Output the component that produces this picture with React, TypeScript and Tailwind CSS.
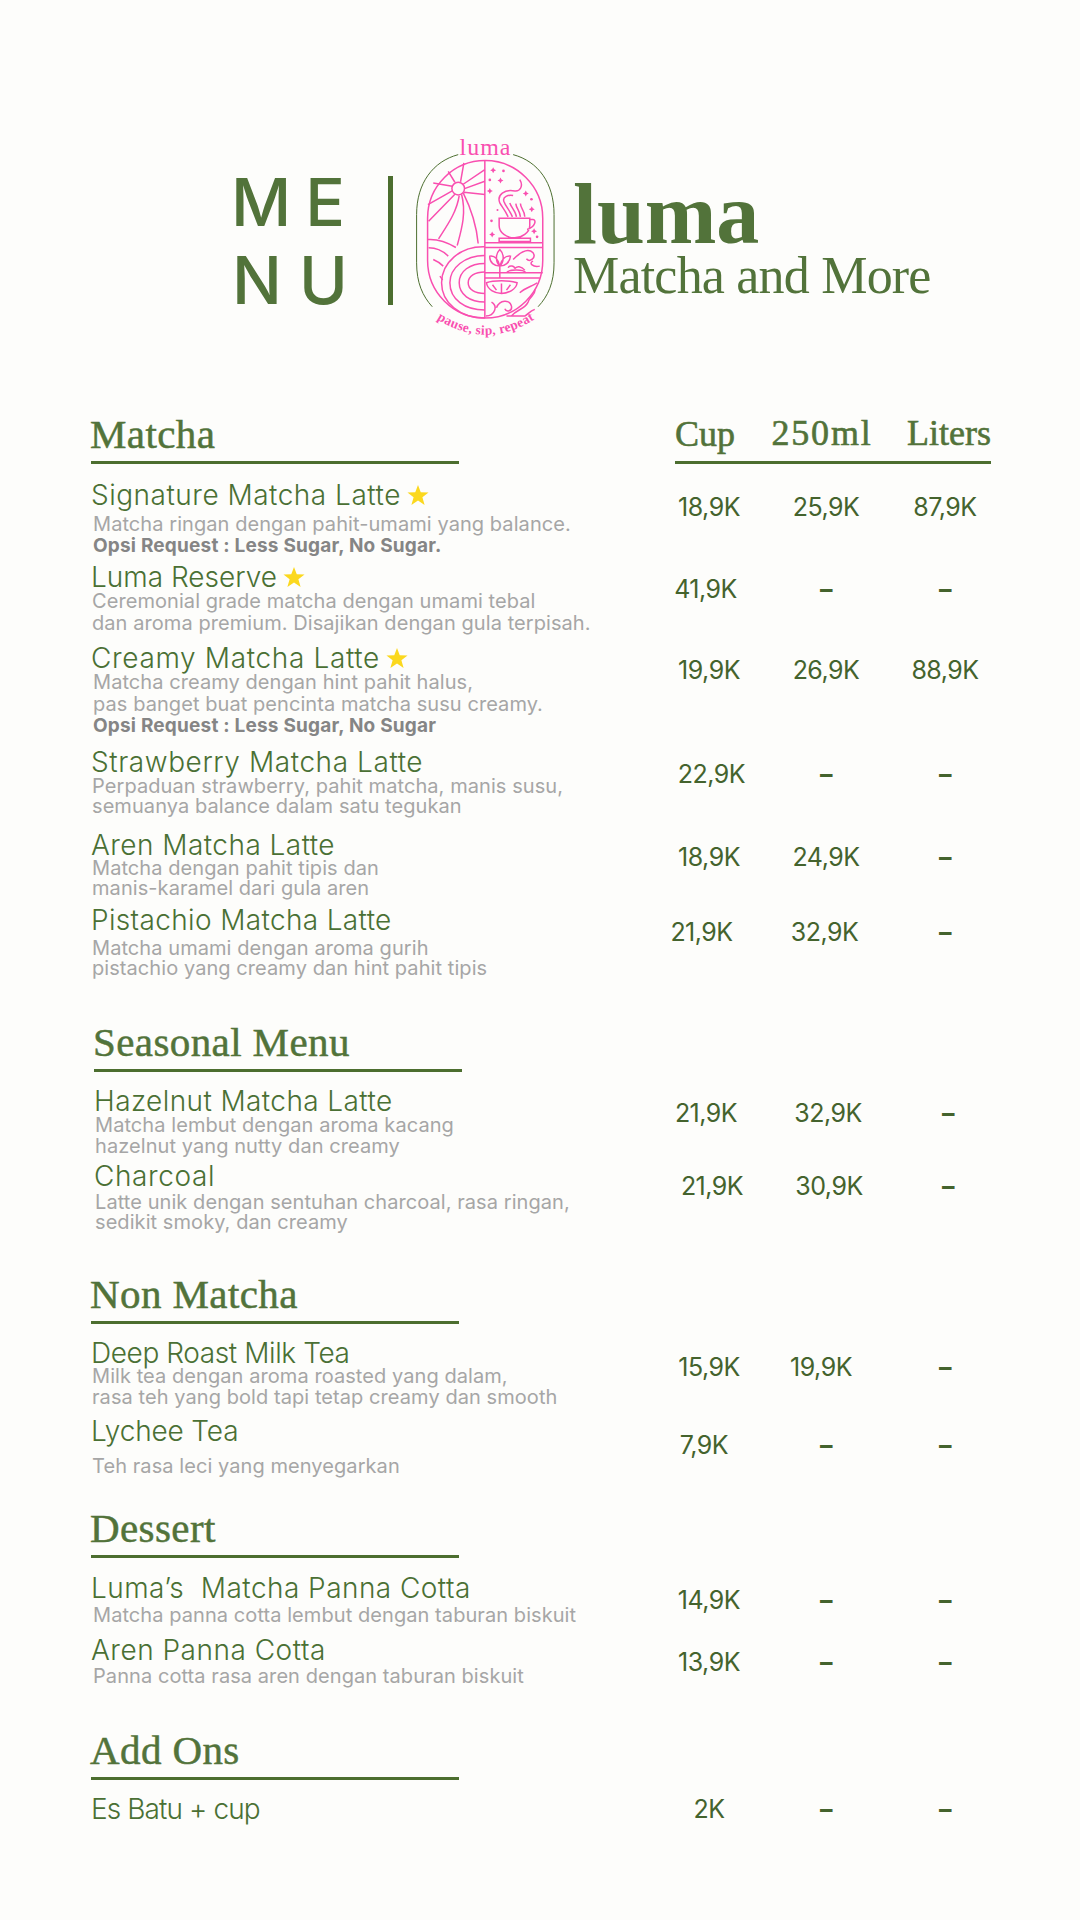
const serif = 'font-["Liberation_Serif",serif]'

interface Item {
  name: string
  star?: boolean
  desc?: string[]
  bold?: string
  prices: [string, string, string]
  rowClass: string
  nameClass?: string
  descClass?: string
  priceClass?: string
  cupClass?: string
  midClass?: string
}

interface Section {
  title: string
  sectionClass: string
  ruleClass: string
  items: Item[]
}

const sections: Section[] = [
  {
    title: 'Matcha',
    sectionClass: 'mt-0',
    ruleClass: 'mb-[15px]',
    items: [
      {
        name: 'Signature Matcha Latte',
        star: true,
        desc: ['Matcha ringan dengan pahit-umami yang balance.'],
        bold: 'Opsi Request : Less Sugar, No Sugar.',
        prices: ['18,9K', '25,9K', '87,9K'],
        rowClass: 'h-[82px]',
        descClass: 'mt-[5px] pl-[2px] leading-[22px]',
      },
      {
        name: 'Luma Reserve',
        star: true,
        desc: ['Ceremonial grade matcha dengan umami tebal', 'dan aroma premium. Disajikan dengan gula terpisah.'],
        prices: ['41,9K', '–', '–'],
        rowClass: 'h-[81px]',
        nameClass: 'tracking-[0px]',
        descClass: 'pl-[1px] leading-[22px]',
        cupClass: 'pr-[7px]',
      },
      {
        name: 'Creamy Matcha Latte',
        star: true,
        desc: ['Matcha creamy dengan hint pahit halus,', 'pas banget buat pencinta matcha susu creamy.'],
        bold: 'Opsi Request : Less Sugar, No Sugar',
        prices: ['19,9K', '26,9K', '88,9K'],
        rowClass: 'h-[104px]',
        nameClass: 'tracking-[0.65px]',
        descClass: 'pl-[2px] leading-[22px]',
      },
      {
        name: 'Strawberry Matcha Latte',
        desc: ['Perpaduan strawberry, pahit matcha, manis susu,', 'semuanya balance dalam satu tegukan'],
        prices: ['22,9K', '–', '–'],
        rowClass: 'h-[83px]',
        nameClass: 'tracking-[0.57px]',
        descClass: 'mt-[1px] pl-[1px] leading-[20px]',
        cupClass: 'pl-[5px]',
      },
      {
        name: 'Aren Matcha Latte',
        desc: ['Matcha dengan pahit tipis dan', 'manis-karamel dari gula aren'],
        prices: ['18,9K', '24,9K', '–'],
        rowClass: 'h-[75px]',
        nameClass: 'tracking-[0.45px]',
        descClass: 'pl-[1px] leading-[20px]',
      },
      {
        name: 'Pistachio Matcha Latte',
        desc: ['Matcha umami dengan aroma gurih', 'pistachio yang creamy dan hint pahit tipis'],
        prices: ['21,9K', '32,9K', '–'],
        rowClass: 'h-[118px]',
        nameClass: 'tracking-[0.35px]',
        descClass: 'mt-[5px] pl-[1px] leading-[20px]',
        cupClass: 'pr-[15px]',
        midClass: 'pr-[3px]',
      },
    ],
  },
  {
    title: 'Seasonal Menu',
    sectionClass: 'pl-[3px]',
    ruleClass: 'mb-[13px]',
    items: [
      {
        name: 'Hazelnut Matcha Latte',
        desc: ['Matcha lembut dengan aroma kacang', 'hazelnut yang nutty dan creamy'],
        prices: ['21,9K', '32,9K', '–'],
        rowClass: 'h-[75px]',
        nameClass: 'tracking-[0.4px]',
        descClass: 'mt-[1px] pl-[1px] leading-[21px]',
        cupClass: 'pr-[12px]',
        midClass: 'pr-[2px]',
      },
      {
        name: 'Charcoal',
        desc: ['Latte unik dengan sentuhan charcoal, rasa ringan,', 'sedikit smoky, dan creamy'],
        prices: ['21,9K', '30,9K', '–'],
        rowClass: 'h-[114px]',
        nameClass: 'tracking-[0.6px]',
        descClass: 'mt-[3px] pl-[1px] leading-[20px]',
        priceClass: 'pt-[10px]',
      },
    ],
  },
  {
    title: 'Non Matcha',
    sectionClass: 'mt-0',
    ruleClass: 'mb-[13px]',
    items: [
      {
        name: 'Deep Roast Milk Tea',
        desc: ['Milk tea dengan aroma roasted yang dalam,', 'rasa teh yang bold tapi tetap creamy dan smooth'],
        prices: ['15,9K', '19,9K', '–'],
        rowClass: 'h-[78px]',
        nameClass: 'tracking-[-0.4px]',
        descClass: 'pl-[1px] leading-[21px]',
        priceClass: 'pt-[14px]',
        midClass: 'pr-[10px]',
      },
      {
        name: 'Lychee Tea',
        desc: ['Teh rasa leci yang menyegarkan'],
        prices: ['7,9K', '–', '–'],
        rowClass: 'h-[92px]',
        nameClass: 'tracking-[-0.15px]',
        descClass: 'mt-[12px] pl-[1px] leading-[20px]',
        priceClass: 'pt-[14px]',
        cupClass: 'pr-[10px]',
      },
    ],
  },
  {
    title: 'Dessert',
    sectionClass: 'mt-[1px]',
    ruleClass: 'mb-[14px]',
    items: [
      {
        name: 'Luma’s  Matcha Panna Cotta',
        desc: ['Matcha panna cotta lembut dengan taburan biskuit'],
        prices: ['14,9K', '–', '–'],
        rowClass: 'h-[62px]',
        nameClass: 'tracking-[0.45px]',
        descClass: 'mt-[4px] pl-[2px] leading-[20px]',
      },
      {
        name: 'Aren Panna Cotta',
        desc: ['Panna cotta rasa aren dengan taburan biskuit'],
        prices: ['13,9K', '–', '–'],
        rowClass: 'h-[96px]',
        nameClass: 'tracking-[0.5px]',
        descClass: 'mt-[3px] pl-[2px] leading-[20px]',
      },
    ],
  },
  {
    title: 'Add Ons',
    sectionClass: 'mt-0',
    ruleClass: 'mb-[13px]',
    items: [
      {
        name: 'Es Batu + cup',
        prices: ['2K', '–', '–'],
        rowClass: 'h-[40px]',
        nameClass: 'tracking-[-0.9px]',
        priceClass: 'pt-0',
      },
    ],
  },
]

function Star() {
  return (
    <svg viewBox="0 0 24 24" className="ml-[6px] h-[22px] w-[22px] shrink-0">
      <polygon points="12,1 15,9 23.5,9.2 16.8,14.4 19.2,22.8 12,17.9 4.8,22.8 7.2,14.4 0.5,9.2 9,9" fill="#fbd81e" />
    </svg>
  )
}

function Price({ value, className }: { value: string; className: string }) {
  return <div className={`text-center ${value === '–' ? 'font-bold' : ''} ${className}`}>{value}</div>
}

function MenuRow({ item }: { item: Item }) {
  return (
    <div className={`flex ${item.rowClass}`}>
      <div className="w-[559px] shrink-0">
        <div className={`mt-[3px] flex h-[26px] items-center text-[28px] font-[350] leading-[26px] whitespace-pre text-[#4a7034] ${item.nameClass ?? 'tracking-[0.5px]'}`}>
          {item.name}
          {item.star && <Star />}
        </div>
        {item.desc && (
          <div className={`text-[20px] tracking-[0.07px] whitespace-pre text-[#a6a6a6] ${item.descClass ?? ''}`}>
            {item.desc.map((line) => (
              <div key={line}>{line}</div>
            ))}
            {item.bold && <div className="text-[19px] font-bold tracking-[0.2px] text-[#858585]">{item.bold}</div>}
          </div>
        )}
      </div>
      <div className={`flex text-[25px] leading-[32px] tracking-[-0.5px] text-[#44632d] ${item.priceClass ?? 'pt-3'}`}>
        <Price value={item.prices[0]} className={`w-[118px] ${item.cupClass ?? ''}`} />
        <Price value={item.prices[1]} className={`w-[116px] ${item.midClass ?? ''}`} />
        <Price value={item.prices[2]} className="w-[122px]" />
      </div>
    </div>
  )
}

function Logo() {
  return (
    <svg viewBox="640 40 440 640" className="h-[213px] w-[147px] shrink-0" fill="none">
      <path d="M775 105C700 125 650 190 650 285V430C650 490 668 530 697 562" stroke="#4c6e2f" strokeWidth="3" />
      <path d="M940 105C1015 125 1063 190 1063 285V430C1063 490 1045 530 1015 562" stroke="#4c6e2f" strokeWidth="3" />
      <text x="857" y="107" textAnchor="middle" fontFamily="Liberation Serif" fontSize="72" letterSpacing="3" fill="#f94fb0">luma</text>
      <g stroke="#f94fb0" strokeWidth="4.5">
        <rect x="683" y="123" width="346" height="473" rx="173" />
        <path d="M855 123V596M855 370H1029M855 384H1029M855 460H1029M855 476H1020" />
        {/* sun */}
        <circle cx="775" cy="207" r="19" />
        <path d="M782 187L792 130M765 188L745 155M790 194L855 150M794 207L855 185M792 218L855 225M757 200L700 190M757 214L684 255M765 224L686 305M778 228C770 280 740 320 716 358M785 224C800 280 785 330 772 378M790 220C815 270 830 320 835 372" />
        {/* hills */}
        <path d="M684 360C715 358 745 370 768 384M686 385C710 385 730 395 745 410M700 420C712 425 722 432 730 440M720 470C723 474 726 478 728 482" />
        {/* rings */}
        <path d="M855 382C780 380 725 430 725 490C725 550 780 596 855 596M855 408C795 408 750 445 750 490C750 540 795 572 855 572M855 432C810 432 778 455 778 490C778 525 810 548 855 548M855 458C825 458 805 470 805 490C805 510 825 522 855 522" />
        {/* cup */}
        <path d="M898 296H990V318C990 340 965 355 945 355C920 355 898 340 898 318ZM990 300H1000C1010 300 1008 322 982 330M898 356H992V366H898Z" />
        <path d="M925 292C915 270 905 260 900 250C890 225 915 208 945 214C960 216 972 200 960 180M938 292C930 272 918 262 912 245C908 232 925 225 940 228M950 292C948 275 935 265 930 250M962 292C960 272 950 268 948 252M975 292C975 272 962 268 962 252" />
        {/* plant */}
        <path d="M900 390C885 405 888 428 900 440C912 428 915 405 900 390ZM900 440V476M900 440C885 440 868 430 870 410C885 408 895 420 900 440M900 440C915 440 930 430 932 410C917 408 905 420 900 440" />
        <path d="M925 445C930 435 945 440 945 448M945 448C950 438 965 440 975 452M920 460C925 450 970 448 978 460" />
        {/* scrolls */}
        <path d="M940 420C960 400 985 385 1000 400C1010 415 990 430 980 418M1020 440C1000 445 985 430 1000 425" />
        {/* bowl */}
        <path d="M860 490C880 482 930 482 952 490C950 510 925 522 905 522C885 522 862 510 860 490ZM905 492V522M878 496L890 512M932 496L920 512" />
        {/* waves */}
        <path d="M858 590C885 590 895 560 875 548M890 565C900 540 930 540 935 560C938 575 920 580 915 568M935 590C950 570 975 570 985 548C990 530 1010 525 1005 510M960 520C975 505 1000 500 1012 490M920 590H975C985 585 990 575 1005 570" />
      </g>
      <g fill="#f94fb0">
        <circle cx="911" cy="154" r="4" />
        <circle cx="870" cy="181" r="4" />
        <circle cx="995" cy="239" r="4" />
        <circle cx="875" cy="304" r="4" />
        <circle cx="1012" cy="352" r="4" />
        <circle cx="893" cy="271" r="3" />
        <path d="M880 143l3 6 6 3-6 3-3 6-3-6-6-3 6-3zM902 174l3 6 6 3-6 3-3 6-3-6-6-3 6-3zM870 205l3 6 6 3-6 3-3 6-3-6-6-3 6-3zM978 213l3 6 6 3-6 3-3 6-3-6-6-3 6-3zM996 260l3 6 6 3-6 3-3 6-3-6-6-3 6-3zM877 336l3 6 6 3-6 3-3 6-3-6-6-3 6-3zM1003 326l3 6 6 3-6 3-3 6-3-6-6-3 6-3z" />
      </g>
      <path id="logo-arc" d="M700 592Q860 700 1016 592" />
      <text fontFamily="Liberation Serif" fontWeight="bold" fontSize="40" letterSpacing="1" fill="#f94fb0">
        <textPath href="#logo-arc" startOffset="50%" textAnchor="middle">pause, sip, repeat</textPath>
      </text>
    </svg>
  )
}

export default function App() {
  return (
    <div className='h-[1920px] w-[1080px] overflow-hidden bg-[#fdfdfb] font-["Inter",sans-serif]'>
      <header className="flex h-[414px] items-start pl-[231px] pt-[133px]">
        <div className="mt-[30px] w-[157px] text-[66px] font-medium leading-[78px] text-[#52733a]">
          <div className="tracking-[14px]">ME</div>
          <div className="pl-[1px] tracking-[17px]">NU</div>
        </div>
        <div className="mt-[43px] h-[129px] w-[5px] bg-[#4c6e2f]" />
        <div className="ml-[20px]">
          <Logo />
        </div>
        <div className={`ml-[13px] mt-[48px] text-[#52733a] ${serif}`}>
          <div className="text-[86px] font-bold leading-[66px]">luma</div>
          <div className="mt-[1px] whitespace-pre text-[52px] leading-[56px] tracking-[-0.8px]">Matcha and More</div>
        </div>
      </header>

      <main className="pl-[91px]">
        {sections.map((section, i) => (
          <section key={section.title} className={section.sectionClass}>
            <div className={`flex h-[50px] items-end ${section.ruleClass}`}>
              <div className="w-[368px] border-b-[3px] border-[#4c6e2f]">
                <div className={`-ml-[1px] h-[47px] text-[41px] leading-[40px] tracking-[0.4px] whitespace-pre text-[#52733a] [-webkit-text-stroke:0.5px_#52733a] ${serif}`}>
                  {section.title}
                </div>
              </div>
              {i === 0 && (
                <div className={`ml-[216px] flex w-[316px] justify-between border-b-[3px] border-[#4c6e2f] text-[36px] text-[#52733a] [-webkit-text-stroke:0.6px_#52733a] ${serif}`}>
                  <span className="h-[47px] leading-[41px]">Cup</span>
                  <span className="ml-[2px] h-[47px] leading-[39px] tracking-[1.8px]">250ml</span>
                  <span className="h-[47px] leading-[39px]">Liters</span>
                </div>
              )}
            </div>
            {section.items.map((item) => (
              <MenuRow key={item.name} item={item} />
            ))}
          </section>
        ))}
      </main>
    </div>
  )
}
